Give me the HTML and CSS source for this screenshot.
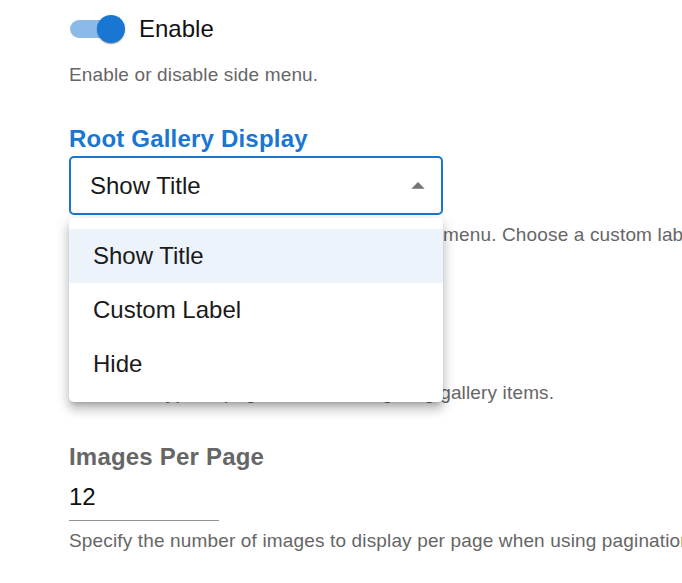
FILE: index.html
```html
<!DOCTYPE html>
<html lang="en">
<head>
    <meta charset="UTF-8">
    <meta name="viewport" content="width=device-width, initial-scale=1.0">
    <title>Gallery Settings</title>
    <link rel="stylesheet" href="styles.css">
</head>
<body>
    <div class="settings">
        <div class="switch-row">
            <span class="switch">
                <span class="switch-track"></span>
                <span class="switch-thumb"></span>
            </span>
            <span class="switch-label">Enable</span>
        </div>
        <p class="help">Enable or disable side menu.</p>

        <div class="field">
            <div class="field-label focused">Root Gallery Display</div>
            <div class="select-wrap">
                <div class="select open">
                    <span>Show Title</span>
                    <svg class="select-icon" viewBox="0 0 24 24" width="32" height="32"><path d="m7 14 5-5 5 5z"/></svg>
                </div>
                <ul class="menu">
                    <li class="menu-item selected">Show Title</li>
                    <li class="menu-item">Custom Label</li>
                    <li class="menu-item">Hide</li>
                </ul>
            </div>
            <p class="help">Choose how the root gallery appears in the menu. Choose a custom label to rename it.</p>
        </div>

        <div class="field">
            <div class="field-label">Pagination Type</div>
            <div class="select">
                <span>Numbered</span>
                <svg class="select-icon" viewBox="0 0 24 24" width="32" height="32"><path d="m7 10 5 5 5-5z"/></svg>
            </div>
            <p class="help tight">Select the type of pagination for navigating gallery items.</p>
        </div>

        <div class="field">
            <div class="field-label">Images Per Page</div>
            <input class="text-input" type="text" value="12">
            <p class="help">Specify the number of images to display per page when using pagination.</p>
        </div>
    </div>
</body>
</html>
```

FILE: styles.css
```css
body {
    margin: 0;
    padding: 0;
    font-family: "Liberation Sans", Arial, sans-serif;
    color: #212121;
    background: #fff;
    overflow: hidden;
}
.settings {
    padding-left: 69px;
    white-space: nowrap;
}
.switch-row {
    display: flex;
    align-items: center;
    height: 58px;
}
.switch {
    position: relative;
    width: 58px;
    height: 30px;
    margin-left: 1px;
    margin-right: 11px;
}
.switch-track {
    position: absolute;
    left: 0;
    top: 6px;
    width: 50px;
    height: 18px;
    border-radius: 9px;
    background-color: #1976d2;
    opacity: 0.5;
}
.switch-thumb {
    position: absolute;
    left: 27px;
    top: 1px;
    width: 28px;
    height: 28px;
    border-radius: 50%;
    background-color: #1976d2;
    box-shadow: 0 2px 1px -1px rgba(0,0,0,0.2), 0 1px 1px 0 rgba(0,0,0,0.14), 0 1px 3px 0 rgba(0,0,0,0.12);
}
.switch-label {
    font-size: 24px;
    line-height: 32px;
    color: #111;
}
.help {
    margin: 5px 0 0;
    font-size: 19px;
    line-height: 24px;
    letter-spacing: 0.15px;
    color: #666;
}
.field {
    margin-top: 36px;
}
.field-label {
    font-size: 24px;
    font-weight: bold;
    line-height: 32px;
    letter-spacing: 0.2px;
    color: #666;
    margin-bottom: 1px;
}
.field-label.focused {
    color: #1976d2;
}
.select-wrap {
    position: relative;
}
.select {
    display: flex;
    align-items: center;
    justify-content: space-between;
    box-sizing: border-box;
    width: 374px;
    height: 59px;
    padding: 0 7px 0 19px;
    border: 1px solid #bbb;
    border-radius: 5px;
    font-size: 24px;
    color: #1a1a1a;
}
.select.open {
    border: 2px solid #1976d2;
}
.select-icon {
    fill: #757575;
}
.select + .help,
.select-wrap + .help {
    margin-top: 8px;
}
.select + .help.tight {
    margin-top: 6px;
}
.menu {
    position: absolute;
    top: 62px;
    left: 0;
    width: 374px;
    margin: 0;
    padding: 11px 0;
    list-style: none;
    background: #fff;
    border-radius: 5px;
    box-shadow: 0 5px 5px -3px rgba(0,0,0,0.2), 0 8px 10px 1px rgba(0,0,0,0.14), 0 3px 14px 2px rgba(0,0,0,0.12);
    z-index: 2;
}
.menu-item {
    height: 54px;
    line-height: 54px;
    padding-left: 24px;
    font-size: 24px;
    color: #1a1a1a;
}
.menu-item.selected {
    background-color: #edf3fb;
}
.text-input {
    display: block;
    box-sizing: content-box;
    width: 150px;
    height: 32px;
    margin-top: 8px;
    padding: 0 0 7px;
    border: none;
    border-bottom: 1px solid #949494;
    font-family: inherit;
    font-size: 24px;
    color: #111;
    outline: none;
}
.text-input + .help {
    margin-top: 8px;
}
```
